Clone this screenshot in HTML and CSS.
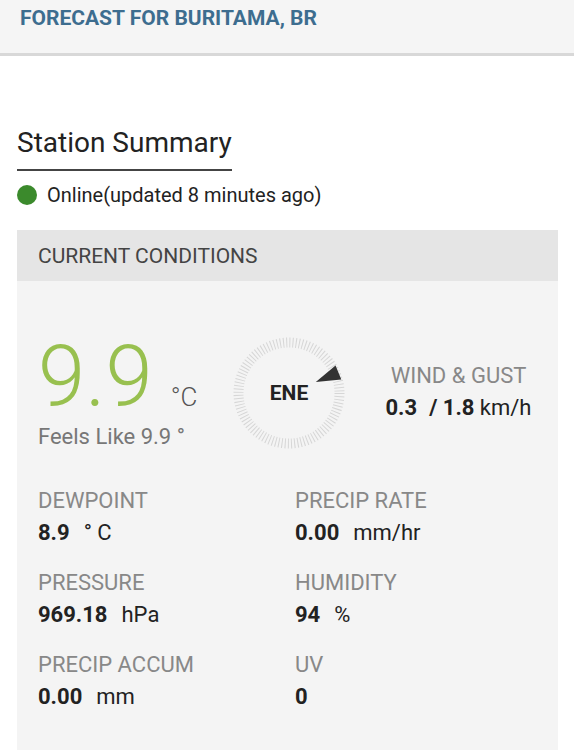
FILE: index.html
```html
<!DOCTYPE html>
<html lang="en">
<head>
  <meta charset="UTF-8" />
  <meta name="viewport" content="width=device-width, initial-scale=1.0" />
  <title>Buritama Station</title>
  <link rel="stylesheet" href="styles.css">
</head>

<body>
  <header class="topbar">
    <h1>FORECAST FOR BURITAMA, BR</h1>
  </header>

  <section class="summary">
    <h2>Station Summary</h2>

    <div class="status">
      <span class="dot"></span>
      <span>Online(updated 8 minutes ago)</span>
    </div>

    <div class="card">
      <div class="card-head">CURRENT CONDITIONS</div>

      <div class="now">
        <div class="temp">
          <div class="temp-main"><span class="big">9.9</span><span class="deg">°C</span></div>
          <div class="feels">Feels Like 9.9 °</div>
        </div>

        <div class="compass">
          <svg width="112" height="112" viewBox="0 0 112 112">
            <!-- 100 ticks round the dial -->
            <circle cx="56" cy="56" r="50.5" fill="none" stroke="#d6d6d6" stroke-width="10"
                    stroke-dasharray="1 2.173"></circle>
            <polygon points="56,27 48.5,2.5 63.5,2.5" fill="#333" transform="rotate(67.5 56 56)"></polygon>
          </svg>
          <span class="dir">ENE</span>
        </div>

        <div class="wind">
          <div class="label">WIND &amp; GUST</div>
          <div class="value"><b>0.3</b><b class="gust">/ 1.8</b> km/h</div>
        </div>
      </div>

      <div class="stats">
        <div class="stat">
          <div class="label">DEWPOINT</div>
          <div class="value"><b>8.9</b><span class="unit">° C</span></div>
        </div>
        <div class="stat">
          <div class="label">PRECIP RATE</div>
          <div class="value"><b>0.00</b><span class="unit">mm/hr</span></div>
        </div>
        <div class="stat">
          <div class="label">PRESSURE</div>
          <div class="value"><b>969.18</b><span class="unit">hPa</span></div>
        </div>
        <div class="stat">
          <div class="label">HUMIDITY</div>
          <div class="value"><b>94</b><span class="unit">%</span></div>
        </div>
        <div class="stat">
          <div class="label">PRECIP ACCUM</div>
          <div class="value"><b>0.00</b><span class="unit">mm</span></div>
        </div>
        <div class="stat">
          <div class="label">UV</div>
          <div class="value"><b>0</b></div>
        </div>
      </div>
    </div>
  </section>
</body>
</html>
```

FILE: styles.css
```css
body {
  font-family: Roboto, 'Liberation Sans', sans-serif;
  background: white;
  color: #222;
  margin: 0;
  padding: 0;
}

.topbar {
  background: #f5f5f5;
  height: 56px;
  border-bottom: 3px solid #d8d8d8;
  padding: 6px 20px 0;
  box-sizing: border-box;
}

.topbar h1 {
  margin: 0;
  font-size: 21px;
  font-weight: 700;
  color: #3d6d8f;
}

.summary {
  padding: 71px 16px 0 17px;
}

.summary h2 {
  display: inline-block;
  margin: 0;
  font-size: 28px;
  font-weight: 400;
  line-height: 32px;
  color: #222;
  padding-bottom: 10px;
  border-bottom: 2px solid #444;
}

.status {
  display: flex;
  align-items: center;
  gap: 10px;
  margin-top: 12px;
  font-size: 20px;
  line-height: 24px;
}

.dot {
  width: 20px;
  height: 20px;
  border-radius: 50%;
  background: #3b8a2c;
}

.card {
  margin-top: 23px;
  background: #f4f4f4;
  min-height: 540px;
}

.card-head {
  background: #e5e5e5;
  height: 51px;
  display: flex;
  align-items: center;
  padding-left: 21px;
  font-size: 21px;
  color: #444;
}

.now {
  display: flex;
  padding: 56px 0 0 21px;
}

.temp {
  width: 195px;
}

.temp-main {
  line-height: 80px;
  height: 80px;
}

.big {
  font-size: 85px;
  font-weight: 300;
  color: #98c04f;
}

.deg {
  font-size: 26px;
  line-height: 1;
  font-weight: 300;
  color: #555;
  margin-left: 18px;
}

.feels {
  margin-top: 7px;
  font-size: 22px;
  line-height: 26px;
  color: #777;
}

.compass {
  display: grid;
  place-items: center;
  width: 112px;
  height: 112px;
}

.compass svg,
.compass .dir {
  grid-area: 1 / 1;
}

.dir {
  font-size: 21px;
  font-weight: 700;
  color: #222;
}

.wind {
  flex: 1;
  margin-left: 14px;
  padding-top: 26px;
  text-align: center;
}

.label {
  font-size: 22px;
  line-height: 26px;
  color: #888;
}

.value {
  margin-top: 6px;
  font-size: 22px;
  line-height: 26px;
  color: #222;
}

.gust {
  margin-left: 12px;
}

.unit {
  margin-left: 14px;
}

.stats {
  display: grid;
  grid-template-columns: 257px 1fr;
  row-gap: 24px;
  padding: 38px 21px 0;
}
```
